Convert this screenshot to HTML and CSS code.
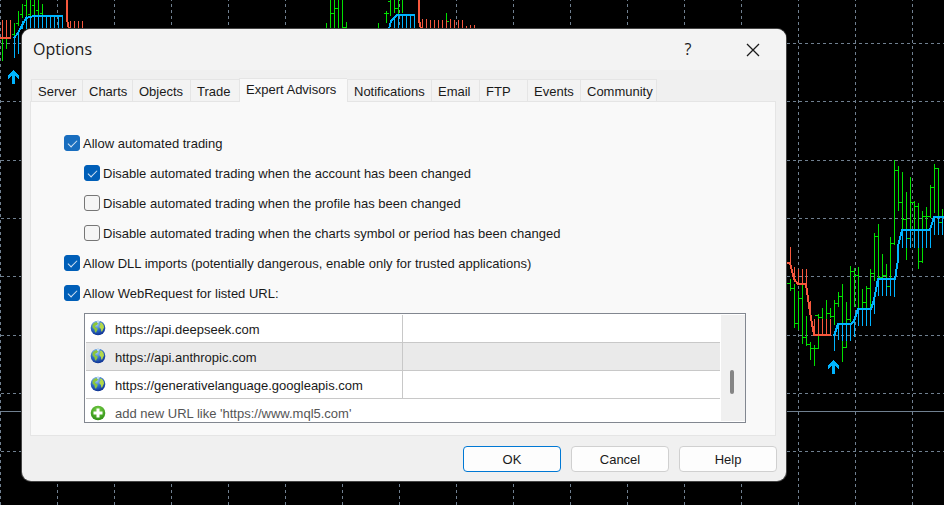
FILE: index.html
```html
<!DOCTYPE html>
<html lang="en">

<head>
    <meta charset="UTF-8">
    <meta name="viewport" content="width=device-width, initial-scale=1.0">
    <title>Options</title>
    <link rel="stylesheet" href="styles.css">
</head>

<body>
    <!-- Price chart behind the dialog -->
    <svg class="chart" viewBox="0 0 944 505" preserveAspectRatio="xMinYMin slice" aria-hidden="true">
        <path class="grid" stroke-dashoffset="2" d="M.5 0V505M57.500 0V505M114.500 0V505M171.500 0V505M228.500 0V505M285.500 0V505M342.500 0V505M399.500 0V505M456.500 0V505M513.500 0V505M570.500 0V505M627.500 0V505M684.500 0V505M741.500 0V505M798.500 0V505M855.500 0V505M912.500 0V505" />
        <path class="grid" stroke-dashoffset="5" d="M0 43.500H944M0 101.500H944M0 160.500H944M0 218.500H944M0 276.500H944M0 335.500H944M0 393.500H944M0 451.500H944" />
        <path class="level" d="M0 411.500H944" />

        <!-- bars -->
        <path class="up" d="M2.500 38V61M6.500 38V49M10.500 33V38M14.500 23V36M18.500 11V26M22.500 4V18M26.500 0V17M30.500 0V16M34.500 0V16M38.500 0V16M42.500 4V17
            M12 34.500H14M16 23.500H18M20 14.500H22M24 5.500H26M28 14.500H30M32 5.500H34M36 10.500H38M40 13.500H42
            M326.500 23V29M330.500 0V29M334.500 0V29M338.500 0V29M342.500 0V29M346.500 22V29M331 13.500H334M335 8.500H338M343 27.500H346
            M378.500 23V29M386.500 11V23M390.500 0V16M394.500 0V13M398.500 0V15M402.500 0V13M446.500 13V23M384 13.500H389M388 1.500H390M395 8.500H398M447 21.500H449" />
        <path class="up" d="M786.500 263V288M790.500 279V291M794.500 284V328M798.500 291V330M802.500 285V344M806.500 316V346M810.500 342V360M814.500 345V366M818.500 314V349M822.500 308V320M826.500 300V325M830.500 308V318M834.500 300V325M838.500 292V307M842.500 284V362M846.500 302V348M850.500 266V322M854.500 268V307M858.500 267V309M862.500 289V309M866.500 286V309M870.500 269V309M874.500 233V281M878.500 224V279M882.500 254V279M886.500 264V288M890.500 237V279M894.500 160V245M898.500 166V211M902.500 172V229M906.500 192V260M910.500 177V238M914.500 201V229M918.500 203V269M922.500 211V263M926.500 207V229M930.500 185V218M934.500 164V213M938.500 168V225M942.500 209V235
            M787 283.500H790M791 288.500H794M795 323.500H798M799 298.500H802M803 337.500H806M807 344.500H810M811 348.500H818M815 315.500H818M819 317.500H822M827 313.500H830M831 316.500H834M835 303.500H838M839 296.500H842M843 347.500H846M847 319.500H850M851 271.500H854M855 275.500H858M863 302.500H866M867 288.500H870M871 273.500H874M875 236.500H878M879 277.500H882M883 275.500H886M887 286.500H890M891 243.500H894M895 170.500H898M899 202.500H902M903 219.500H906M907 238.500H910M911 202.500H914M915 206.500H918M919 261.500H922M923 216.500H926M927 216.500H930M931 187.500H934M935 168.500H938M939 222.500H942" />

        <!-- down trend -->
        <path class="down" d="M2.500 20V38M6.500 20V38M10.500 20V38M70.500 21V29M74.500 21V29M78.500 21V29M82.500 21V29
            M422.500 19V29M426.500 19V29M430.500 20V29M434.500 20V29M438.500 20V29M442.500 20V29M446.500 20V29M450.500 19V29M454.500 20V29M458.500 20V29M462.500 20V29M466.500 26V29M470.500 25V29M474.500 25V29
            M786.500 247V263M790.500 247V263M794.500 267V282M798.500 269V284M802.500 269V284M806.500 269V284M810.500 301V317M814.500 319V335M818.500 319V335M822.500 319V335M826.500 319V335M830.500 319V335" />
        <path class="down trend" d="M0 38H11M66.500 0V17L69 29M418.500 0V18L421 29M786 263H790L794 279L798 284H806L810 312L814 335H831" />

        <!-- up trend -->
        <path class="rise" d="M14.500 37V58M18.500 32V54M22.500 21V29M26.500 16V29M30.500 16V29M34.500 16V29M38.500 16V29M42.500 16V29M46.500 16V29M50.500 16V29M54.500 16V29M58.500 16V29M62.500 16V29
            M394.500 17V29M398.500 15V29M402.500 15V29M406.500 15V29M410.500 15V29M414.500 15V29
            M834.500 334V351M838.500 324V340M842.500 324V341M846.500 324V341M850.500 324V341M854.500 320V337M858.500 309V326M862.500 309V326M866.500 309V326M870.500 309V326M874.500 298V314M878.500 279V296M882.500 279V296M886.500 279V296M890.500 279V296M894.500 279V297M902.500 230V248M906.500 230V248M910.500 230V248M914.500 230V248M918.500 230V248M922.500 230V248M926.500 230V248M930.500 230V248M934.500 217V235M938.500 217V235M942.500 217V235" />
        <path class="rise trend" d="M14 38L18 33L26 18L34 16H63M389 29L391 21L397 15H415M834 336L838 324H851L854 321L858 309H871L874 300L878 279H895L898 260V246L902 230H930L934 217H944" />
        <path class="arrow" d="M13 70L19 76V79L15 76V84H12V76L8 79V76ZM833.500 360L839 366V369L835 366V374H832V366L828 369V366Z" />
    </svg>

    <!-- Icons shared by the URL list -->
    <svg class="symbols" aria-hidden="true">
        <defs>
            <radialGradient id="sea" cx="40%" cy="25%" r="80%">
                <stop offset="0" stop-color="#a9d4f5" />
                <stop offset=".45" stop-color="#3777ce" />
                <stop offset="1" stop-color="#0a2b8c" />
            </radialGradient>
            <radialGradient id="leaf" cx="50%" cy="30%" r="75%">
                <stop offset="0" stop-color="#7bd24a" />
                <stop offset="1" stop-color="#288a10" />
            </radialGradient>
        </defs>
        <symbol id="globe" viewBox="0 0 16 16">
            <circle cx="8" cy="8" r="7.300" fill="url(#sea)" />
            <path fill="#8cc63a" d="M2.500 5L4 3L6.500 2L8 3.500L7 5L5.500 5.500L5 7L7.500 8.500L7.500 10L6.500 11.500L6 13L4.800 11.500L4.500 9.500L2.500 7.500Z" />
            <path fill="#b4d948" d="M9.500 3L11.500 2.500L13.500 5L14 7.500L13 9.500L12.200 11.500L11.200 11.500L11 9L9.500 7.500L9.300 6L10.500 4.500Z" />
            <path fill="#e3f4fb" d="M6.500 1.300L10 1.200L9 2.600L7.500 2.800Z" />
        </symbol>
        <symbol id="plus" viewBox="0 0 16 16">
            <circle cx="8" cy="8" r="7.300" fill="url(#leaf)" />
            <path fill="#fff" d="M6.500 3.500H9.500V6.500H12.500V9.500H9.500V12.500H6.500V9.500H3.500V6.500H6.500Z" />
        </symbol>
    </svg>

    <div class="dialog" role="dialog" aria-labelledby="dialogTitle">
        <div class="title-bar">
            <h1 class="title" id="dialogTitle">Options</h1>
            <button type="button" class="title-button help">?</button>
            <button type="button" class="title-button" aria-label="Close">
                <svg width="14" height="14" viewBox="0 0 14 14">
                    <path d="M1 1L13 13M13 1L1 13" stroke="#1a1a1a" stroke-width="1.300" />
                </svg>
            </button>
        </div>

        <form id="optionsForm" class="dialog-body">
            <div class="tabs" role="tablist">
                <button type="button" class="tab" role="tab">Server</button>
                <button type="button" class="tab" role="tab">Charts</button>
                <button type="button" class="tab" role="tab">Objects</button>
                <button type="button" class="tab" role="tab">Trade</button>
                <button type="button" class="tab active" role="tab" aria-selected="true">Expert Advisors</button>
                <button type="button" class="tab" role="tab">Notifications</button>
                <button type="button" class="tab" role="tab">Email</button>
                <button type="button" class="tab" role="tab">FTP</button>
                <button type="button" class="tab" role="tab">Events</button>
                <button type="button" class="tab" role="tab">Community</button>
            </div>

            <div class="panel">
                <div class="option">
                    <input type="checkbox" id="allowTrading" class="soft" checked>
                    <label for="allowTrading">Allow automated trading</label>
                </div>
                <div class="option nested">
                    <input type="checkbox" id="disableAccount" checked>
                    <label for="disableAccount">Disable automated trading when the account has been changed</label>
                </div>
                <div class="option nested">
                    <input type="checkbox" id="disableProfile">
                    <label for="disableProfile">Disable automated trading when the profile has been changed</label>
                </div>
                <div class="option nested">
                    <input type="checkbox" id="disableSymbol">
                    <label for="disableSymbol">Disable automated trading when the charts symbol or period has been changed</label>
                </div>
                <div class="option">
                    <input type="checkbox" id="allowDll" checked>
                    <label for="allowDll">Allow DLL imports (potentially dangerous, enable only for trusted applications)</label>
                </div>
                <div class="option">
                    <input type="checkbox" id="allowWeb" checked>
                    <label for="allowWeb">Allow WebRequest for listed URL:</label>
                </div>

                <div class="url-list">
                    <table class="urls">
                        <tr>
                            <td class="url"><svg class="icon"><use href="#globe" /></svg>https://api.deepseek.com</td>
                            <td></td>
                        </tr>
                        <tr class="selected">
                            <td class="url"><svg class="icon"><use href="#globe" /></svg>https://api.anthropic.com</td>
                            <td></td>
                        </tr>
                        <tr>
                            <td class="url"><svg class="icon"><use href="#globe" /></svg>https://generativelanguage.googleapis.com</td>
                            <td></td>
                        </tr>
                        <tr class="new">
                            <td class="url" colspan="2"><svg class="icon"><use href="#plus" /></svg>add new URL like 'https://www.mql5.com'</td>
                        </tr>
                    </table>
                    <div class="scrollbar">
                        <div class="thumb"></div>
                    </div>
                </div>
            </div>

            <div class="buttons">
                <button type="submit" class="button default">OK</button>
                <button type="button" class="button">Cancel</button>
                <button type="button" class="button">Help</button>
            </div>
        </form>
    </div>
</body>

</html>
```

FILE: styles.css
```css
* {
    box-sizing: border-box;
}

body {
    margin: 0;
    padding: 29px 22px 24px;
    min-height: 100vh;
    overflow: hidden;
    background-color: #000;
    color: #1a1a1a;
    font-family: "Liberation Sans", Arial, sans-serif;
    font-size: 13px;
}

button {
    font: inherit;
    color: inherit;
}

/* Chart */
.chart {
    position: absolute;
    top: 0;
    left: 0;
    width: 100%;
    height: 100%;
    fill: none;
    shape-rendering: crispEdges;
}

.grid {
    stroke: #708090;
    stroke-dasharray: 3 3;
}

.level {
    stroke: #708090;
}

.up {
    stroke: #00e000;
}

.down {
    stroke: #f7583d;
}

.rise {
    stroke: #00b4ff;
}

.trend {
    stroke-width: 2;
}

.arrow {
    fill: #00b4ff;
}

.symbols {
    position: absolute;
    width: 0;
    height: 0;
}

/* Dialog */
.dialog {
    position: relative;
    max-width: 764px;
    background-color: #f0f0f0;
    border-radius: 9px;
    box-shadow: 0 0 0 1px #444;
    overflow: hidden;
}

.title-bar {
    display: flex;
    align-items: center;
    height: 41px;
    padding: 0 10px 0 11px;
    background-color: #f3f3f3;
}

.title {
    flex: 1;
    margin: 0;
    padding-bottom: 2px;
    font-family: "Open Sans", "Noto Sans", sans-serif;
    font-size: 16px;
    font-weight: normal;
}

.title-button {
    display: flex;
    align-items: center;
    justify-content: center;
    width: 46px;
    height: 32px;
    padding: 0;
    border: none;
    background: none;
}

.help {
    margin-right: 19px;
    padding-bottom: 2px;
    font-family: "Open Sans", "Noto Sans", sans-serif;
    font-size: 16px;
}

.dialog-body {
    padding: 8px 9px 9px 8px;
}

.tabs {
    display: grid;
    grid-template-columns: 51px 50px 58px 49px 108px 84px 48px 48px 53px 77px;
    align-items: end;
    padding-left: 1px;
}

.tab {
    height: 22px;
    padding: 2px 0 0 6px;
    border: 1px solid #e5e5e5;
    border-right: none;
    border-bottom: none;
    background-color: #f3f3f3;
    text-align: left;
    white-space: nowrap;
}

.tab:last-child {
    border-right: 1px solid #e5e5e5;
}

.tab.active {
    position: relative;
    height: 24px;
    margin-bottom: -1px;
    padding-top: 0;
    padding-bottom: 2px;
    background-color: #f9f9f9;
}

.panel {
    margin-right: 1px;
    padding: 33px 29px 12px 33px;
    border: 1px solid #e5e5e5;
    background-color: #f9f9f9;
}

.option {
    display: flex;
    align-items: center;
    gap: 3px;
    height: 16px;
    margin-bottom: 14px;
}

.nested {
    margin-left: 20px;
}

input[type="checkbox"] {
    display: grid;
    place-content: center;
    appearance: none;
    width: 16px;
    height: 16px;
    margin: 0;
    border: 1px solid #767676;
    border-radius: 3px;
    background-color: #f5f5f5;
}

input[type="checkbox"]:checked {
    border-color: #005fb8;
    background-color: #005fb8;
}

input[type="checkbox"].soft:checked {
    border-color: #196ebf;
    background-color: #196ebf;
}

input[type="checkbox"]:checked::before {
    content: "";
    width: 8px;
    height: 4px;
    margin-bottom: 2px;
    border: solid #d5e6f5;
    border-width: 0 0 1px 1px;
    transform: rotate(-45deg);
}

/* URL list */
.url-list {
    display: flex;
    gap: 1px;
    height: 110px;
    margin: -2px 0 0 20px;
    padding: 1px 0 1px 1px;
    border: 1px solid #828790;
    background-color: #fff;
    overflow: hidden;
}

.urls {
    flex: 1;
    height: 112px;
    border-spacing: 0;
    table-layout: fixed;
}

.urls td {
    height: 28px;
    padding: 0;
    border-bottom: 1px solid #c8c8c8;
    white-space: nowrap;
}

.urls .url {
    width: 317px;
    padding: 2px 0 0 4px;
    border-right: 1px solid #c8c8c8;
}

.urls .new .url {
    border: none;
    color: #555;
}

.selected {
    background-color: #eaeaea;
}

.icon {
    width: 16px;
    height: 16px;
    margin: -3px 9px 1px 0;
    vertical-align: middle;
}

.scrollbar {
    width: 24px;
    padding: 55px 9px 0;
    background-color: #f0f0f0;
}

.thumb {
    width: 4px;
    height: 24px;
    border-radius: 2px;
    background-color: #858585;
}

/* Bottom buttons */
.buttons {
    display: flex;
    justify-content: flex-end;
    gap: 10px;
    margin-top: 10px;
}

.button {
    width: 98px;
    height: 26px;
    padding: 0;
    border: 1px solid #d0d0d0;
    border-radius: 4px;
    background-color: #fdfdfd;
}

.button.default {
    border-color: #0078d4;
}
```
